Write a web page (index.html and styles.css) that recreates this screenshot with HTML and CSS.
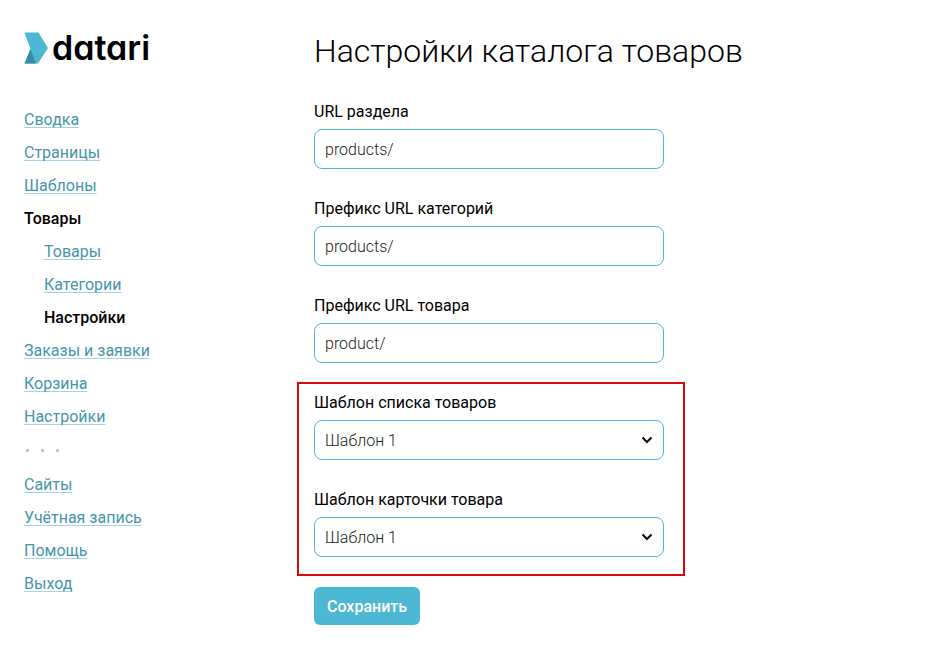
FILE: index.html
```
<!DOCTYPE html>
<html lang="ru">
<head>
    <meta charset="UTF-8">
    <meta name="viewport" content="width=device-width, initial-scale=1.0">
    <title>Настройки каталога товаров</title>
    <link rel="stylesheet" href="styles.css">
</head>
<body>
    <div class="page">
        <aside class="sidebar">
            <a href="/" class="logo">
                <svg class="logo-mark" viewBox="0 0 24 32" aria-hidden="true">
                    <path d="M0.5 0.5H14.5L24 16L14 31.5H0.5L6.5 17Z" fill="#4db8d3"/>
                    <path d="M6.5 17L12 31.5H0.5Z" fill="#3a8ca5"/>
                </svg>
                <span class="logo-text">datari</span>
            </a>
            <nav>
                <ul class="menu">
                    <li><a href="summary">Сводка</a></li>
                    <li><a href="pages">Страницы</a></li>
                    <li><a href="templates">Шаблоны</a></li>
                    <li>
                        <b>Товары</b>
                        <ul class="submenu">
                            <li><a href="products">Товары</a></li>
                            <li><a href="categories">Категории</a></li>
                            <li><b>Настройки</b></li>
                        </ul>
                    </li>
                    <li><a href="orders">Заказы и заявки</a></li>
                    <li><a href="cart">Корзина</a></li>
                    <li><a href="settings">Настройки</a></li>
                </ul>
                <div class="dots"><i></i><i></i><i></i></div>
                <ul class="menu">
                    <li><a href="sites">Сайты</a></li>
                    <li><a href="account">Учётная запись</a></li>
                    <li><a href="help">Помощь</a></li>
                    <li><a href="logout">Выход</a></li>
                </ul>
            </nav>
        </aside>

        <main class="content">
            <h1>Настройки каталога товаров</h1>
            <form class="settings-form">
                <div class="field">
                    <label for="section-url">URL раздела</label>
                    <input type="text" id="section-url" value="products/">
                </div>
                <div class="field">
                    <label for="category-prefix">Префикс URL категорий</label>
                    <input type="text" id="category-prefix" value="products/">
                </div>
                <div class="field">
                    <label for="product-prefix">Префикс URL товара</label>
                    <input type="text" id="product-prefix" value="product/">
                </div>
                <div class="highlight">
                    <div class="field">
                        <label for="list-template">Шаблон списка товаров</label>
                        <select id="list-template">
                            <option>Шаблон 1</option>
                        </select>
                    </div>
                    <div class="field">
                        <label for="card-template">Шаблон карточки товара</label>
                        <select id="card-template">
                            <option>Шаблон 1</option>
                        </select>
                    </div>
                </div>
                <button type="submit" class="save-button">Сохранить</button>
            </form>
        </main>
    </div>
</body>
</html>
```
FILE: styles.css
```
body {
    margin: 0;
    font-family: Roboto, sans-serif;
    font-size: 16px;
    line-height: 24px;
    background-color: #fff;
    color: #000;
}

.page {
    display: flex;
    gap: 40px;
    padding: 32px 24px;
}

.sidebar {
    flex: 0 0 250px;
}

.logo {
    display: flex;
    align-items: center;
    gap: 4px;
    height: 32px;
    margin-bottom: 39px;
    color: #000;
    text-decoration: none;
}

.logo-mark {
    width: 24px;
    height: 32px;
}

.logo-text {
    font-family: Inter, Lato, sans-serif;
    font-feature-settings: "cv11";
    font-size: 34px;
    font-weight: 600;
    line-height: 32px;
}

.menu,
.submenu {
    list-style: none;
    margin: 0;
    padding: 0;
    line-height: 33px;
}

.submenu {
    padding-left: 20px;
}

.menu a {
    color: #4596aa;
    text-decoration: underline;
    text-decoration-color: #a5d5e2;
    text-decoration-thickness: 1px;
    text-decoration-skip-ink: none;
    text-underline-offset: 2px;
}

.menu b {
    font-weight: 500;
}

.dots {
    display: flex;
    align-items: center;
    gap: 12px;
    height: 35px;
    padding-left: 2px;
}

.dots i {
    width: 3px;
    height: 3px;
    border-radius: 50%;
    background-color: #b5b5b5;
}

.content {
    flex: 1;
    min-width: 0;
}

h1 {
    margin: 0 0 30px;
    font-size: 32px;
    font-weight: 300;
    line-height: 38px;
}

.settings-form {
    max-width: 350px;
}

.field {
    margin-bottom: 28px;
}

label {
    display: block;
    margin-bottom: 5px;
}

input,
select {
    display: block;
    box-sizing: border-box;
    width: 100%;
    height: 40px;
    padding: 0 10px;
    border: 1px solid #4db8d3;
    border-radius: 8px;
    background-color: #fff;
    color: #222;
    font-family: inherit;
    font-size: 16px;
    font-weight: 300;
}

select {
    appearance: none;
    padding-right: 30px;
    background-image: url("data:image/svg+xml,%3Csvg xmlns='http://www.w3.org/2000/svg' viewBox='0 0 12 8'%3E%3Cpath d='M1.5 1.5L6 6L10.5 1.5' fill='none' stroke='%23000' stroke-width='2'/%3E%3C/svg%3E");
    background-repeat: no-repeat;
    background-position: right 10px center;
    background-size: 12px 8px;
}

/* red frame around the template selects */
.highlight {
    margin: -9px -21px 11px -17px;
    padding: 7px 19px 17px 15px;
    border: 2px solid #d8090f;
}

.highlight .field:last-child {
    margin-bottom: 0;
}

.save-button {
    height: 38px;
    padding: 0 13px;
    border: 0;
    border-radius: 6px;
    background-color: #4db8d3;
    color: #fff;
    font-family: inherit;
    font-size: 16px;
    font-weight: 500;
    cursor: pointer;
}
```
